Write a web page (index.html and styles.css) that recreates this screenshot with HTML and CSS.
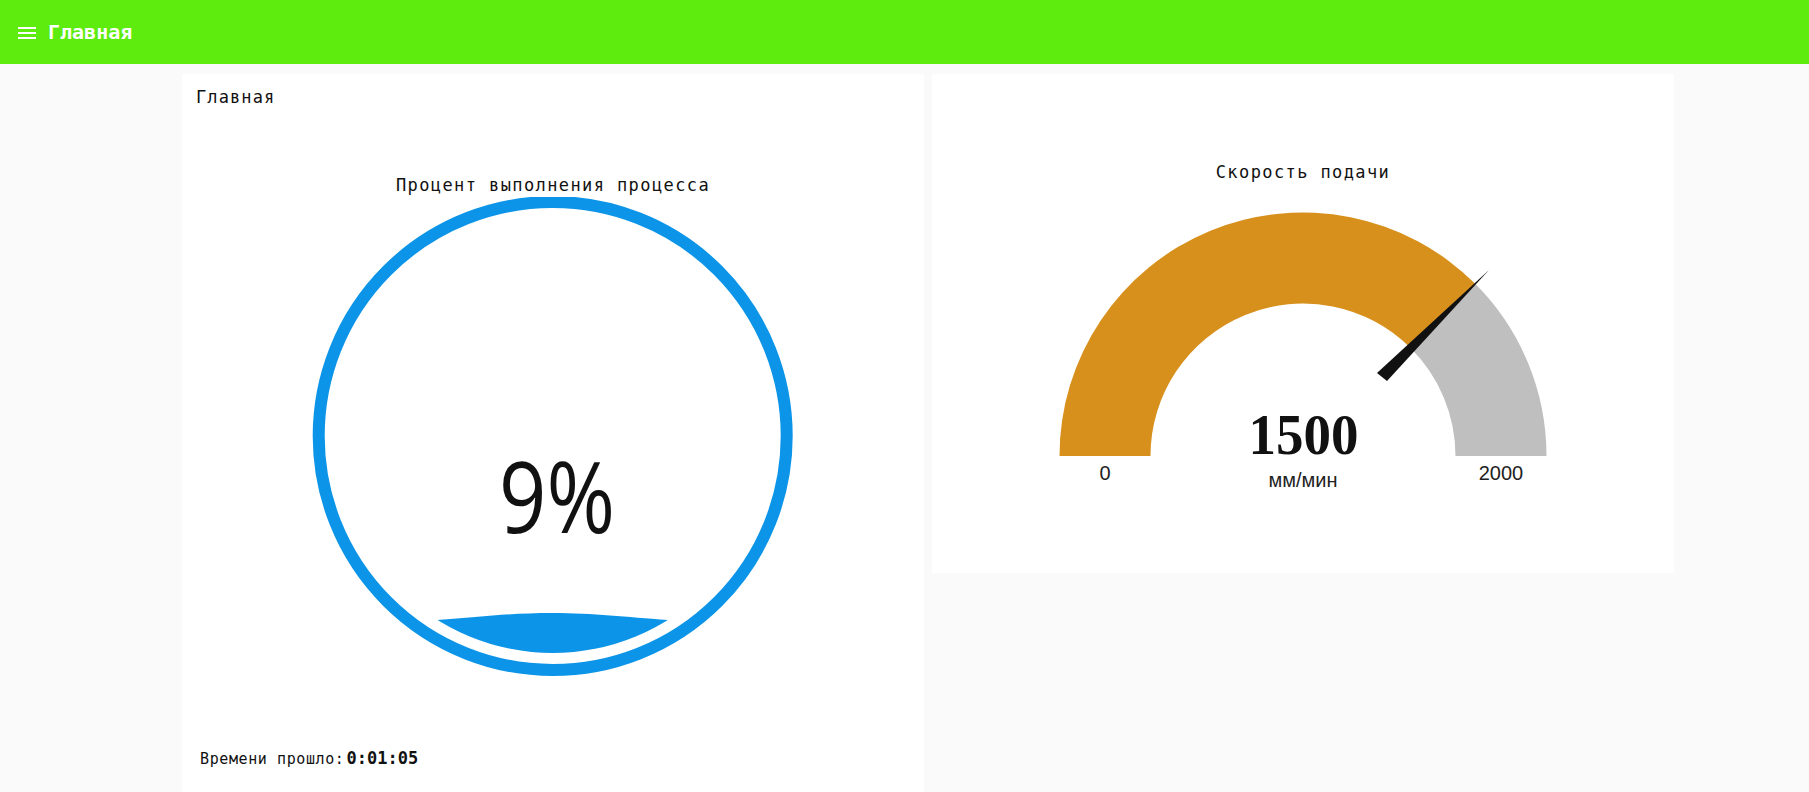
FILE: index.html
```html
<!DOCTYPE html>
<html lang="ru">
<head>
<meta charset="utf-8">
<title>Главная</title>
<link rel="stylesheet" href="styles.css">
</head>
<body>
<header class="topbar">
  <svg class="menu-icon" width="18" height="12" viewBox="0 0 18 12">
    <rect x="0" y="0" width="18" height="2" fill="#fff"/>
    <rect x="0" y="5" width="18" height="2" fill="#fff"/>
    <rect x="0" y="10" width="18" height="2" fill="#fff"/>
  </svg>
  <span class="topbar-title">Главная</span>
</header>
<main class="content">
  <section class="card card-left">
    <div class="group-title">Главная</div>
    <div class="gauge-title gauge-title-liquid">Процент выполнения процесса</div>
    <svg class="liquid" width="742" height="490" viewBox="0 0 742 490">
      <defs>
        <clipPath id="fillclip"><circle cx="370.7" cy="239" r="217"/></clipPath>
      </defs>
      <circle cx="370.7" cy="239" r="234" fill="none" stroke="#0c95e8" stroke-width="12"/>
      <path clip-path="url(#fillclip)" fill="#0c95e8" d="M100 423 L255 423 C298 420 328 416 370 416 C413 416 443 420 486 423 L640 423 L640 470 L100 470 Z"/>
      <text class="liquid-value" x="375" y="336" text-anchor="middle" textLength="116" lengthAdjust="spacingAndGlyphs">9%</text>
    </svg>
    <div class="elapsed"><span class="elapsed-label">Времени прошло:</span><span class="elapsed-value">0:01:05</span></div>
  </section>
  <section class="card card-right">
    <div class="gauge-title gauge-title-speed">Скорость подачи</div>
    <svg class="speed" width="742" height="320" viewBox="0 0 742 320">
      <path fill="#d8901d" d="M127.5 272 A243.5 243.5 0 0 1 543.2 99.8 L478.8 164.2 A152.5 152.5 0 0 0 218.5 272 Z"/>
      <path fill="#bfbfbf" d="M543.2 99.8 A243.5 243.5 0 0 1 614.5 272 L523.5 272 A152.5 152.5 0 0 0 478.8 164.2 Z"/>
      <polygon fill="#111" points="445,189 455,197 557,86"/>
      <text class="speed-value" x="371.5" y="270" text-anchor="middle" textLength="110" lengthAdjust="spacingAndGlyphs">1500</text>
      <text class="speed-label" x="173" y="296" text-anchor="middle">0</text>
      <text class="speed-label" x="569" y="296" text-anchor="middle">2000</text>
      <text class="speed-label" x="371" y="303" text-anchor="middle">мм/мин</text>
    </svg>
  </section>
</main>
</body>
</html>
```

FILE: styles.css
```css
html, body {
  margin: 0;
  padding: 0;
}
body {
  background: #fafafa;
  width: 1809px;
  height: 792px;
  overflow: hidden;
  font-family: "DejaVu Sans Mono", monospace;
  color: #111;
}
.topbar {
  height: 64px;
  background: #5eec0e;
  display: flex;
  align-items: center;
  padding-left: 18px;
  gap: 12px;
  box-sizing: border-box;
}
.menu-icon {
  display: block;
  margin-top: 2px;
}
.topbar-title {
  color: #fff;
  font-family: "DejaVu Sans Mono", monospace;
  font-weight: bold;
  font-size: 20px;
  line-height: 24px;
}
.content {
  display: flex;
  align-items: flex-start;
  gap: 8px;
  padding: 10px 0 0 182px;
}
.card {
  background: #fff;
  width: 742px;
  box-sizing: border-box;
}
.card-left {
  height: 740px;
  display: flex;
  flex-direction: column;
}
.card-right {
  height: 499px;
}
.group-title {
  padding: 11px 0 0 14px;
  font-size: 17px;
  line-height: 24px;
  letter-spacing: 1.1px;
}
.gauge-title {
  text-align: center;
  font-size: 17px;
  line-height: 24px;
  letter-spacing: 1.4px;
}
.gauge-title-liquid {
  margin-top: 64px;
}
.gauge-title-speed {
  padding-top: 86px;
}
.liquid, .speed {
  display: block;
}
.liquid-value {
  font-family: "Open Sans", sans-serif;
  font-size: 99px;
  fill: #111;
}
.speed-value {
  font-family: "Liberation Serif", serif;
  font-weight: bold;
  font-size: 57px;
  fill: #111;
}
.speed-label {
  font-family: "Liberation Sans", sans-serif;
  font-size: 20px;
  fill: #222;
}
.elapsed {
  margin-top: 59px;
  padding-left: 18px;
  line-height: 24px;
}
.elapsed-label {
  font-size: 15px;
  letter-spacing: 0.6px;
}
.elapsed-value {
  font-size: 17px;
  font-weight: bold;
  margin-left: 2px;
}
```
